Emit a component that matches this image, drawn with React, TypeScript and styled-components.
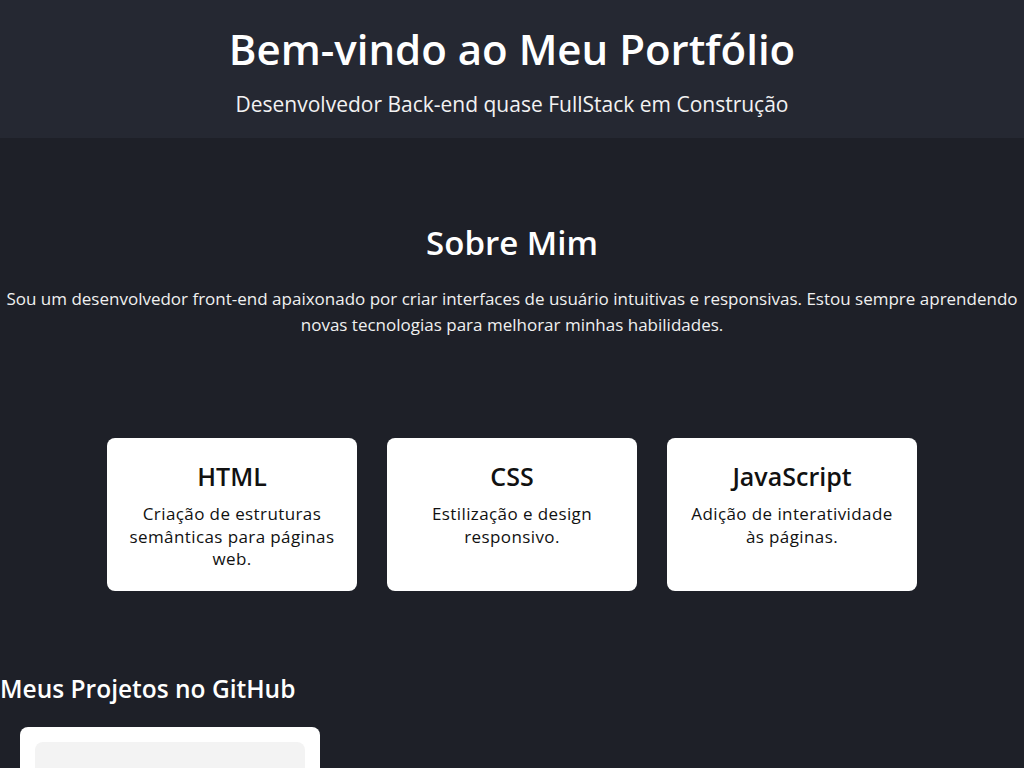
import React from "react";
import styled, { createGlobalStyle } from "styled-components";

const Global = createGlobalStyle`
  html, body { margin: 0; padding: 0; background: #1e2028; }
  body { font-family: "Open Sans", "Noto Sans", sans-serif; color: #ffffff; }
  * { box-sizing: border-box; }
`;

const Header = styled.header`
  background: #252832;
  height: 138px;
  padding-top: 24px;
  display: flex;
  flex-direction: column;
  align-items: center;
  gap: 16px;
`;

const Title = styled.h1`
  margin: 0;
  font-size: 42px;
  line-height: 50px;
  font-weight: 600;
  color: #fff;
`;

const Subtitle = styled.p`
  margin: 0;
  font-size: 21px;
  line-height: 28px;
  font-weight: 400;
  color: #f2f2f2;
`;

const Main = styled.main`
  display: flex;
  flex-direction: column;
`;

const About = styled.section`
  padding-top: 85px;
  display: flex;
  flex-direction: column;
  align-items: center;
  gap: 23px;
`;

const SectionTitle = styled.h2`
  margin: 0;
  font-size: 33px;
  line-height: 40px;
  font-weight: 600;
`;

const AboutText = styled.p`
  margin: 0;
  font-size: 17px;
  line-height: 26px;
  text-align: center;
  color: #f0f0f0;
`;

const Skills = styled.div`
  margin-top: 100px;
  display: flex;
  justify-content: center;
  gap: 30px;
`;

const SkillCard = styled.div`
  width: 250px;
  height: 153px;
  background: #ffffff;
  border-radius: 8px;
  padding: 22px 18px 20px;
  text-align: center;
  color: #111;
`;

const SkillName = styled.h3`
  margin: 0 0 11px;
  font-size: 25px;
  line-height: 32px;
  font-weight: 600;
`;

const SkillDesc = styled.p`
  margin: 0;
  font-size: 17px;
  line-height: 22.5px;
  letter-spacing: 0.4px;
`;

const Projects = styled.section`
  margin-top: 82px;
  display: flex;
  flex-direction: column;
  gap: 22px;
`;

const ProjectsTitle = styled.h2`
  margin: 0;
  font-size: 24.5px;
  line-height: 32px;
  font-weight: 600;
`;

const ProjectCard = styled.div`
  margin-left: 20px;
  width: 300px;
  height: 200px;
  background: #fff;
  border-radius: 8px;
  padding: 15px;
`;

const ProjectPreview = styled.div`
  height: 150px;
  background: #f3f3f3;
  border-radius: 8px;
`;

const skills = [
  { name: "HTML", desc: "Criação de estruturas semânticas para páginas web." },
  { name: "CSS", desc: "Estilização e design responsivo." },
  { name: "JavaScript", desc: "Adição de interatividade às páginas." },
];

export default function App() {
  return (
    <>
      <Global />
      <Header>
        <Title>Bem-vindo ao Meu Portfólio</Title>
        <Subtitle>Desenvolvedor Back-end quase FullStack em Construção</Subtitle>
      </Header>
      <Main>
        <About>
          <SectionTitle>Sobre Mim</SectionTitle>
          <AboutText>
            Sou um desenvolvedor front-end apaixonado por criar interfaces de usuário intuitivas e responsivas. Estou sempre aprendendo novas tecnologias para melhorar minhas habilidades.
          </AboutText>
        </About>
        <Skills>
          {skills.map((s) => (
            <SkillCard key={s.name}>
              <SkillName>{s.name}</SkillName>
              <SkillDesc>{s.desc}</SkillDesc>
            </SkillCard>
          ))}
        </Skills>
        <Projects>
          <ProjectsTitle>Meus Projetos no GitHub</ProjectsTitle>
          <ProjectCard>
            <ProjectPreview />
          </ProjectCard>
        </Projects>
      </Main>
    </>
  );
}
